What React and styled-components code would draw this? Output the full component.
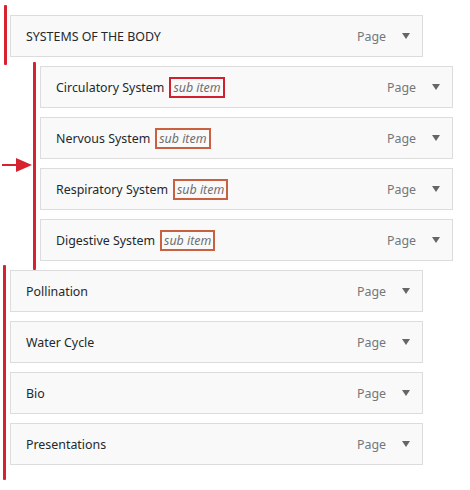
import React from "react";
import styled, { createGlobalStyle } from "styled-components";

const GlobalStyle = createGlobalStyle`
  body {
    margin: 0;
    background: #fff;
    font-family: "Noto Sans", "Open Sans", sans-serif;
  }
`;

const Page = styled.div`
  position: relative;
  width: 470px;
  height: 490px;
  padding-top: 15px;
  box-sizing: border-box;
`;

const Menu = styled.div`
  display: flex;
  flex-direction: column;
  gap: 9px;
`;

const Item = styled.div`
  box-sizing: border-box;
  height: 42px;
  width: 413px;
  margin-left: ${(p) => (p.$sub ? "40px" : "10px")};
  display: flex;
  align-items: center;
  padding: 0 12px 0 15px;
  background: #f9f9f9;
  border: 1px solid #dcdcdc;
`;

const Title = styled.span`
  flex: 1;
  font-size: 12.4px;
  color: #23282d;
  display: flex;
  align-items: center;
`;

const SubTag = styled.span`
  margin-left: 5px;
  padding: 0 2px;
  line-height: 17px;
  border: 2px solid ${(p) => (p.$bright ? "#d21f2f" : "#c9603f")};
  font-style: italic;
  color: #6f6f6f;
`;

const Kind = styled.span`
  font-size: 12.4px;
  color: #72777c;
  margin-right: 16px;
`;

const Caret = styled.span`
  width: 0;
  height: 0;
  border-left: 4px solid transparent;
  border-right: 4px solid transparent;
  border-top: 6px solid #666;
`;

const Bar = styled.div`
  position: absolute;
  left: ${(p) => p.$x}px;
  top: ${(p) => p.$y}px;
  width: 3px;
  height: ${(p) => p.$h}px;
  background: #d7232f;
  border-radius: 1px;
`;

const Pointer = styled.svg`
  position: absolute;
  left: 1px;
  top: 157px;
`;

const items = [
  { label: "SYSTEMS OF THE BODY" },
  { label: "Circulatory System", sub: true, bright: true },
  { label: "Nervous System", sub: true },
  { label: "Respiratory System", sub: true },
  { label: "Digestive System", sub: true },
  { label: "Pollination" },
  { label: "Water Cycle" },
  { label: "Bio" },
  { label: "Presentations" },
];

const App = () => {
  return (
    <>
      <GlobalStyle />
      <Page>
        <Menu>
          {items.map((it) => (
            <Item key={it.label} $sub={it.sub}>
              <Title>
                {it.label}
                {it.sub && <SubTag $bright={it.bright}>sub item</SubTag>}
              </Title>
              <Kind>Page</Kind>
              <Caret />
            </Item>
          ))}
        </Menu>
        <Bar $x={4} $y={5} $h={60} />
        <Bar $x={33} $y={62} $h={208} />
        <Bar $x={3} $y={265} $h={215} />
        <Pointer width="32" height="16" viewBox="0 0 32 16">
          <line x1="1" y1="8" x2="17" y2="8" stroke="#d7232f" strokeWidth="2" />
          <polygon points="15,1 31,8 15,15" fill="#d7232f" />
        </Pointer>
      </Page>
    </>
  );
};

export default App;
